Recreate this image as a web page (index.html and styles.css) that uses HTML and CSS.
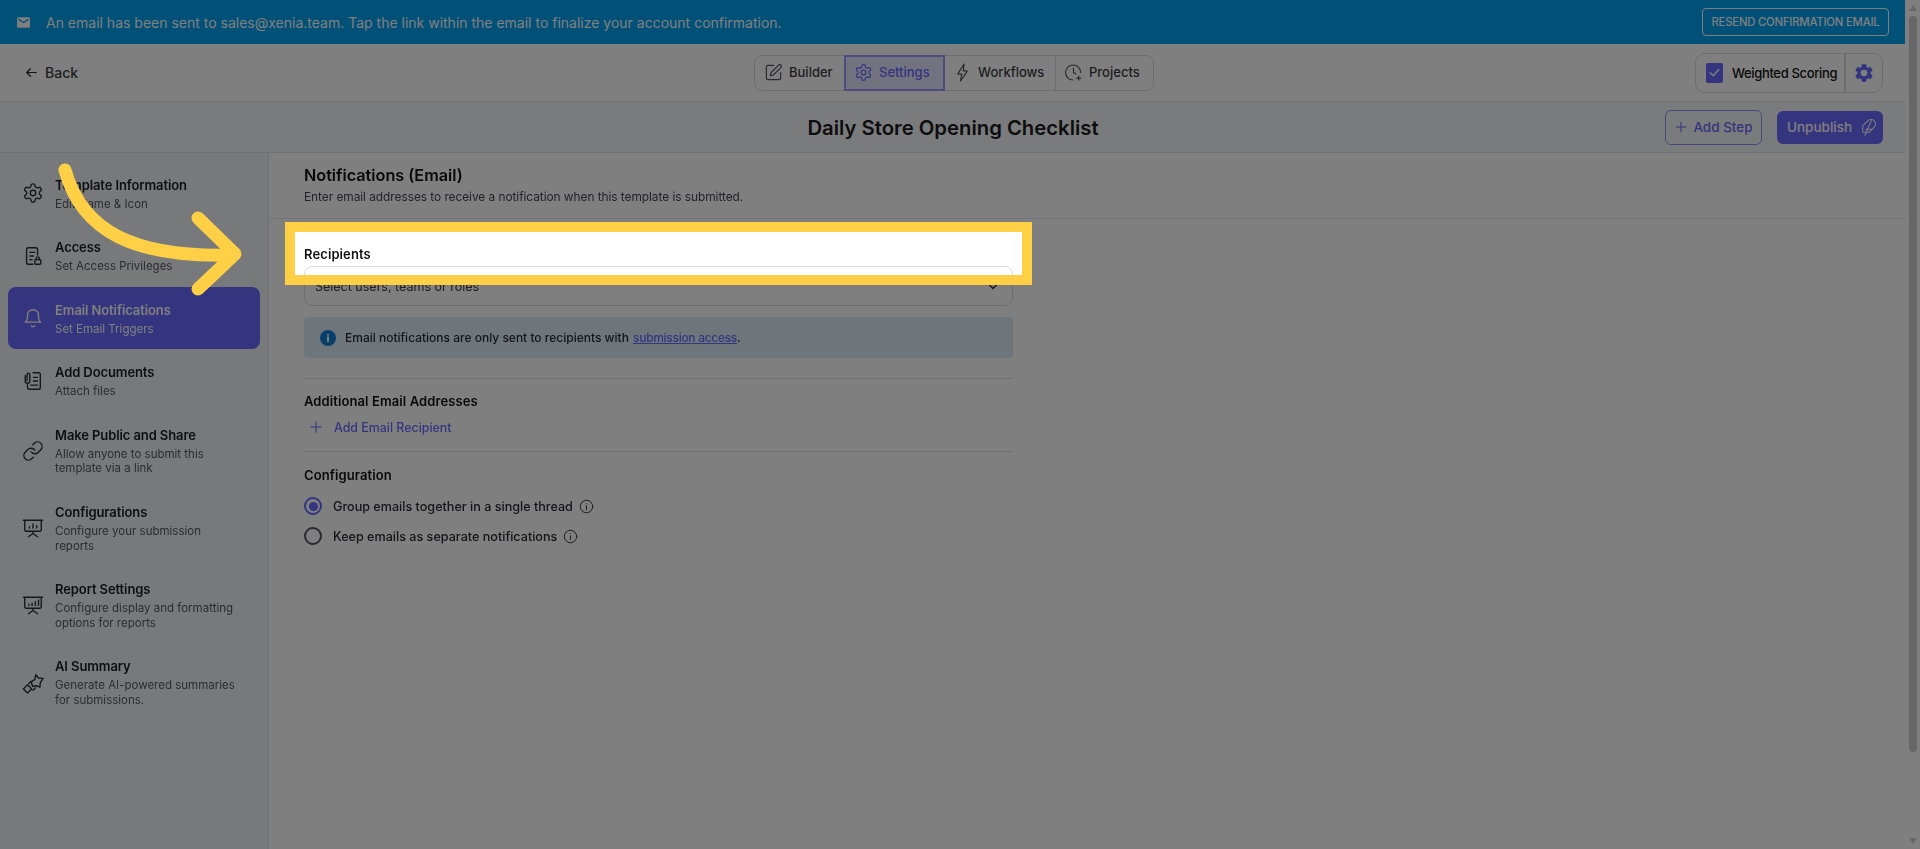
FILE: index.html
```html
<!DOCTYPE html>
<html lang="en">
<head>
<meta charset="utf-8">
<title>Daily Store Opening Checklist</title>
<link rel="stylesheet" href="styles.css">
</head>
<body>
<svg class="defs" width="0" height="0" aria-hidden="true">
  <symbol id="i-gear" viewBox="0 0 24 24"><path d="M12.22 2h-.44a2 2 0 0 0-2 2v.18a2 2 0 0 1-1 1.73l-.43.25a2 2 0 0 1-2 0l-.15-.08a2 2 0 0 0-2.73.73l-.22.38a2 2 0 0 0 .73 2.73l.15.1a2 2 0 0 1 1 1.72v.51a2 2 0 0 1-1 1.74l-.15.09a2 2 0 0 0-.73 2.73l.22.38a2 2 0 0 0 2.73.73l.15-.08a2 2 0 0 1 2 0l.43.25a2 2 0 0 1 1 1.73V20a2 2 0 0 0 2 2h.44a2 2 0 0 0 2-2v-.18a2 2 0 0 1 1-1.73l.43-.25a2 2 0 0 1 2 0l.15.08a2 2 0 0 0 2.73-.73l.22-.39a2 2 0 0 0-.73-2.73l-.15-.08a2 2 0 0 1-1-1.74v-.5a2 2 0 0 1 1-1.74l.15-.09a2 2 0 0 0 .73-2.73l-.22-.38a2 2 0 0 0-2.73-.73l-.15.08a2 2 0 0 1-2 0l-.43-.25a2 2 0 0 1-1-1.73V4a2 2 0 0 0-2-2z"/><circle cx="12" cy="12" r="3"/></symbol>
  <symbol id="i-present" viewBox="0 0 24 24"><path d="M1.500 3.500h21M3 3.500V14a1.500 1.500 0 0 0 1.500 1.500h15A1.500 1.500 0 0 0 21 14V3.500M12 15.500V18M7 21.500l5-3.500 5 3.500"/><path d="M8 12v-1.500M12 12V7.500M16 12V9.500"/></symbol>
  <symbol id="i-report" viewBox="0 0 24 24"><path d="M1.500 3.500h21M3 3.500V14a1.500 1.500 0 0 0 1.500 1.500h15A1.500 1.500 0 0 0 21 14V3.500M12 15.500V18M7 21.500l5-3.500 5 3.500"/><path d="M7.500 12.500v-1.500M11 12.500V10M14.500 12.500V8.500M18 12.500V6.500"/></symbol>
  <symbol id="i-info" viewBox="0 0 24 24"><circle cx="12" cy="12" r="10"/><path d="M12 11v6M12 7.500v.01"/></symbol>
</svg>

<div class="screen">
  <div class="app">
    <div class="banner">
      <div class="banner-msg">
        <svg class="mail" viewBox="0 0 24 24"><path d="M20 4H4c-1.100 0-2 .9-2 2v12c0 1.100.9 2 2 2h16c1.100 0 2-.9 2-2V6c0-1.100-.9-2-2-2zm0 4-8 5-8-5V6l8 5 8-5v2z"/></svg>
        <span>An email has been sent to sales@xenia.team. Tap the link within the email to finalize your account confirmation.</span>
      </div>
      <button class="resend">RESEND CONFIRMATION EMAIL</button>
    </div>

    <header class="topbar">
      <a class="back">
        <svg class="ico-back" viewBox="0 0 24 24"><path d="M21 12H3M10 5l-7 7 7 7"/></svg>
        <span>Back</span>
      </a>
      <nav class="tabs">
        <a class="tab tab-builder">
          <svg class="ico" viewBox="0 0 24 24"><path d="M12 3H5a2 2 0 0 0-2 2v14a2 2 0 0 0 2 2h14a2 2 0 0 0 2-2v-7"/><path d="M18.375 2.625a1 1 0 0 1 3 3l-9.013 9.014a2 2 0 0 1-.853.505l-2.873.84a.5.5 0 0 1-.62-.62l.84-2.873a2 2 0 0 1 .506-.852z"/></svg>
          <span>Builder</span>
        </a>
        <a class="tab tab-settings active">
          <svg class="ico"><use href="#i-gear"/></svg>
          <span>Settings</span>
        </a>
        <a class="tab tab-workflows">
          <svg class="ico" viewBox="0 0 24 24"><path d="M14 1.500 6.300 13.200a.5.500 0 0 0 .4.800H11l-1.500 8.500 8.200-11.700a.5.500 0 0 0-.4-.8H13z"/></svg>
          <span>Workflows</span>
        </a>
        <a class="tab tab-projects">
          <svg class="ico" viewBox="0 0 24 24"><path d="M21 12a9.500 9.500 0 1 0-9.500 9.500M12 6.500V12l3 2M18.500 16.500v5M16 19h5"/></svg>
          <span>Projects</span>
        </a>
      </nav>
      <div class="weighted">
        <div class="weighted-main">
          <span class="checkbox"><svg viewBox="0 0 16 16"><path d="M3.500 8.300 6.700 11.500 12.500 4.800"/></svg></span>
          <span class="weighted-label">Weighted Scoring</span>
        </div>
        <div class="weighted-gear">
          <svg viewBox="0 0 24 24"><path d="M19.140 12.940c.04-.3.06-.61.06-.94 0-.32-.02-.64-.07-.94l2.030-1.580a.49.49 0 0 0 .12-.61l-1.920-3.320a.49.49 0 0 0-.59-.22l-2.390.96c-.5-.38-1.030-.7-1.620-.94l-.36-2.540a.48.48 0 0 0-.48-.41h-3.840c-.24 0-.43.17-.47.41l-.36 2.540c-.59.24-1.130.57-1.620.94l-2.390-.96a.49.49 0 0 0-.59.22L2.740 8.870c-.12.21-.08.47.12.61l2.030 1.580c-.05.3-.09.63-.09.94 0 .31.02.64.07.94l-2.030 1.580a.49.49 0 0 0-.12.61l1.920 3.320c.12.22.37.29.59.22l2.390-.96c.5.38 1.030.7 1.620.94l.36 2.540c.05.24.24.41.48.41h3.840c.24 0 .44-.17.47-.41l.36-2.540c.59-.24 1.130-.56 1.620-.94l2.390.96c.22.08.47 0 .59-.22l1.920-3.320c.12-.22.07-.47-.12-.61l-2.010-1.580zM12 15.600A3.600 3.600 0 1 1 12 8.400a3.600 3.600 0 0 1 0 7.200z"/></svg>
        </div>
      </div>
    </header>

    <div class="titlebar">
      <h1>Daily Store Opening Checklist</h1>
      <div class="title-actions">
        <button class="add-step"><svg viewBox="0 0 24 24"><path d="M12 4v16M4 12h16"/></svg><span>Add Step</span></button>
        <button class="unpublish"><span>Unpublish</span><svg viewBox="0 0 24 24"><path d="M12.670 19a2 2 0 0 0 1.416-.588l6.154-6.172a6 6 0 0 0-8.490-8.490L5.586 9.914A2 2 0 0 0 5 11.328V18a1 1 0 0 0 1 1z"/><path d="M17 2 8 23M17.500 15H9"/></svg></button>
      </div>
    </div>

    <div class="body">
      <aside class="sidebar">
        <a class="side-item">
          <svg class="side-ico"><use href="#i-gear"/></svg>
          <div class="side-text"><div class="side-title">Template Information</div><div class="side-sub">Edit Name &amp; Icon</div></div>
        </a>
        <a class="side-item">
          <svg class="side-ico" viewBox="0 0 24 24"><path d="M17 11V5a2 2 0 0 0-2-2H7a2 2 0 0 0-2 2v14a2 2 0 0 0 2 2h5"/><path d="M8.500 8H14M8.500 12h4M8.500 16H11"/><rect x="14" y="16" width="6.500" height="5" rx="1"/><path d="M15.500 16v-1.300a1.750 1.750 0 0 1 3.500 0V16"/></svg>
          <div class="side-text"><div class="side-title">Access</div><div class="side-sub">Set Access Privileges</div></div>
        </a>
        <a class="side-item selected">
          <svg class="side-ico" viewBox="0 0 24 24"><path d="M6 9a6 6 0 0 1 12 0c0 6 2.500 7.500 2.500 7.500h-17S6 15 6 9"/><path d="M10.300 20.500a2 2 0 0 0 3.400 0"/></svg>
          <div class="side-text"><div class="side-title">Email Notifications</div><div class="side-sub">Set Email Triggers</div></div>
        </a>
        <a class="side-item">
          <svg class="side-ico" viewBox="0 0 24 24"><path d="M12 3h6a2 2 0 0 1 2 2v14a2 2 0 0 1-2 2H8a2 2 0 0 1-2-2v-3"/><path d="M3.500 6v6a2.500 2.500 0 0 0 5 0V5a1.500 1.500 0 0 0-3 0v6.500"/><path d="M12.500 8H17M12.500 12H17M9.500 16.500H17"/></svg>
          <div class="side-text"><div class="side-title">Add Documents</div><div class="side-sub">Attach files</div></div>
        </a>
        <a class="side-item">
          <svg class="side-ico" viewBox="0 0 24 24"><path d="M10 13a5 5 0 0 0 7.540.54l3-3a5 5 0 0 0-7.070-7.070l-1.720 1.710"/><path d="M14 11a5 5 0 0 0-7.540-.54l-3 3a5 5 0 0 0 7.070 7.070l1.710-1.710"/></svg>
          <div class="side-text"><div class="side-title">Make Public and Share</div><div class="side-sub">Allow anyone to submit this<br>template via a link</div></div>
        </a>
        <a class="side-item">
          <svg class="side-ico"><use href="#i-present"/></svg>
          <div class="side-text"><div class="side-title">Configurations</div><div class="side-sub">Configure your submission<br>reports</div></div>
        </a>
        <a class="side-item">
          <svg class="side-ico"><use href="#i-report"/></svg>
          <div class="side-text"><div class="side-title">Report Settings</div><div class="side-sub">Configure display and formatting<br>options for reports</div></div>
        </a>
        <a class="side-item">
          <svg class="side-ico" viewBox="0 0 24 24"><path d="M1.500 18.500 6 14l4.500 4.500L6 23zM10 11l4-3 1-5 3 3.500 5 .5-3 4.500-.5 5-4-1.500-4 .5z"/><path d="M7.500 12.500 10 10M12 20l2.500-2.500"/></svg>
          <div class="side-text"><div class="side-title">AI Summary</div><div class="side-sub">Generate AI-powered summaries<br>for submissions.</div></div>
        </a>
      </aside>

      <main class="main">
        <section class="main-head">
          <h2>Notifications (Email)</h2>
          <p>Enter email addresses to receive a notification when this template is submitted.</p>
        </section>
        <section class="form">
          <label class="field-label recipients">Recipients</label>
          <div class="select">
            <span>Select users, teams or roles</span>
            <svg viewBox="0 0 24 24"><path d="M6 9l6 6 6-6"/></svg>
          </div>
          <div class="notice">
            <svg viewBox="0 0 24 24"><circle cx="12" cy="12" r="11"/><path d="M12 11v6M12 7v.01"/></svg>
            <span>Email notifications are only sent to recipients with <a class="link">submission access</a>.</span>
          </div>
          <hr class="rule rule-a">
          <div class="field-label">Additional Email Addresses</div>
          <a class="add-email"><svg viewBox="0 0 24 24"><path d="M12 4v16M4 12h16"/></svg><span>Add Email Recipient</span></a>
          <hr class="rule rule-b">
          <div class="field-label">Configuration</div>
          <label class="radio-row first"><span class="radio on"></span><span>Group emails together in a single thread</span><svg class="tip"><use href="#i-info"/></svg></label>
          <label class="radio-row"><span class="radio"></span><span>Keep emails as separate notifications</span><svg class="tip"><use href="#i-info"/></svg></label>
        </section>
      </main>
    </div>
  </div>

  <div class="scrollbar">
    <div class="scroll-up"></div>
    <div class="scroll-thumb"></div>
    <div class="scroll-down"></div>
  </div>
</div>

<div class="spotlight"></div>
<svg class="arrow" viewBox="0 0 300 300" width="300" height="300">
  <path d="M65 170C82 232 135 258 233 255M198 218 235 254 198 289"/>
</svg>
</body>
</html>
```
FILE: styles.css
```css
* { box-sizing: border-box; }
html, body { margin: 0; height: 100%; overflow: hidden; }
body { font-family: Inter, "Noto Sans", sans-serif; color: #1c1c22; background: #fff; }
.defs { position: absolute; }
svg { fill: none; stroke: currentColor; stroke-width: 1.8; stroke-linecap: round; stroke-linejoin: round; display: block; flex: none; }
h1, h2, p { margin: 0; }
button { font: inherit; background: none; cursor: pointer; }

.screen { display: flex; height: 100vh; }
.app { flex: 1; min-width: 0; display: flex; flex-direction: column; filter: blur(.35px); }

/* banner */
.banner { height: 44px; flex: none; background: #00a0f0; color: #fff; display: flex; align-items: center; justify-content: space-between; padding: 0 16px 0 17px; }
.banner-msg { display: flex; align-items: center; gap: 16px; font-size: 14px; }
.mail { width: 13px; height: 13px; fill: #fff; stroke: none; transform: scale(1.2); }
.resend { height: 28px; width: 187px; border: 1px solid #fff; border-radius: 4px; color: #fff; font-size: 11.3px; font-weight: 500; padding: 0; letter-spacing: -.2px; }

/* top bar */
.topbar { height: 58px; flex: none; background: #fff; border-bottom: 1px solid #e4e6ea; display: grid; grid-template-columns: 1fr auto 1fr; align-items: center; padding: 0 22px 0 25px; }
.back { display: flex; align-items: center; gap: 7px; font-size: 14px; font-weight: 500; color: #3c3c44; }
.ico-back { width: 13px; height: 13px; color: #27272e; stroke-width: 2.2; }
.tabs { display: flex; height: 36px; border: 1px solid #d8dade; border-radius: 8px; }
.tab { display: flex; align-items: center; gap: 6px; padding-left: 9px; font-size: 13px; font-weight: 500; color: #3c3c44; line-height: 16px; }
.tab span { margin-top: -1px; }
.tab .ico { width: 19px; height: 19px; color: #54545c; stroke-width: 1.5; }
.tab-builder { width: 89px; }
.tab-settings { width: 101px; }
.tab-workflows { width: 111px; border-right: 1px solid #d8dade; padding-left: 8px; }
.tab-projects { width: 97px; padding-left: 8px; }
.tab.active { border: 2px solid #9a96ff; background: #e6e6ff; color: #6868fe; padding-left: 8px; margin: -1px 0; height: 36px; }
.tab.active .ico { color: #6868fe; }
.weighted { justify-self: end; display: flex; height: 40px; width: 188px; border: 1px solid #d8dade; border-radius: 10px; }
.weighted-main { flex: 1; display: flex; align-items: center; gap: 9px; padding-left: 10px; border-right: 2px solid #d8dade; }
.checkbox { width: 17px; height: 20px; border-radius: 2px; background: #6868fe; color: #fff; display: flex; align-items: center; justify-content: center; }
.checkbox svg { width: 15px; height: 15px; stroke-width: 1.6; }
.weighted-label { font-size: 13px; font-weight: 500; color: #111; letter-spacing: -.35px; white-space: nowrap; }
.weighted-gear { width: 36px; display: flex; align-items: center; justify-content: center; }
.weighted-gear svg { width: 22px; height: 22px; fill: #6868fe; stroke: none; }

/* title row */
.titlebar { height: 51px; flex: none; position: relative; background: #f5f7fa; border-bottom: 1px solid #dfe3e9; display: flex; align-items: center; justify-content: flex-end; padding-right: 22px; }
.titlebar h1 { position: absolute; left: 0; right: 0; text-align: center; font-size: 20.3px; font-weight: 600; color: #1a1a20; padding-left: 1px; }
.title-actions { position: relative; display: flex; align-items: center; gap: 15px; }
.add-step { width: 97px; height: 35px; border: 1px solid #8e8ef9; border-radius: 6px; color: #6868fe; display: flex; align-items: center; justify-content: center; gap: 5px; font-size: 13.5px; font-weight: 500; padding: 0; }
.add-step svg { width: 14px; height: 14px; }
.unpublish { width: 106px; height: 33px; border: 0; border-radius: 6px; background: #6868fe; color: #fff; display: flex; align-items: center; gap: 7px; font-size: 13.5px; font-weight: 500; padding: 0 0 0 10px; }
.unpublish svg { width: 18px; height: 18px; stroke-width: 1.4; }

/* body */
.body { flex: 1; display: flex; min-height: 0; }
.sidebar { width: 269px; flex: none; background: #f1f3f6; border-right: 1px solid #dfe3e9; padding: 8.5px 8px 0; }
.side-item { display: flex; align-items: center; gap: 11px; padding: 14px 14px 12.75px; }
.side-item.selected { background: #6868fe; border-radius: 8px; color: #fff; }
.side-ico { width: 22px; height: 22px; stroke-width: 1.5; color: #2e2e36; }
.selected .side-ico { color: #fff; }
.side-title { font-size: 13px; line-height: 18px; font-weight: 600; color: #1c1c22; letter-spacing: -.1px; white-space: nowrap; }
.side-sub { margin-top: 3px; font-size: 11.5px; line-height: 14.75px; font-weight: 400; color: #585860; white-space: nowrap; }
.selected .side-title, .selected .side-sub { color: #fff; }
.main { flex: 1; min-width: 0; background: #fff; }
.main-head { height: 66px; padding: 12px 0 0 35px; border-bottom: 1px solid #e8e9ec; }
.main-head h2 { font-size: 16.2px; line-height: 20px; font-weight: 600; color: #111; }
.main-head p { margin-top: 3px; font-size: 11.9px; line-height: 18px; color: #46464e; letter-spacing: -.05px; }
.form { width: 744px; padding: 25px 0 0 35px; }
.field-label { display: block; font-size: 13px; line-height: 20px; font-weight: 600; color: #111; letter-spacing: .1px; }
.select { margin-top: 2px; height: 40px; border: 1px solid #d8dade; border-radius: 8px; display: flex; align-items: center; justify-content: space-between; padding: 0 9px 0 10px; font-size: 12.5px; color: #3c3c44; }
.select svg { width: 20px; height: 20px; color: #3c3c44; stroke-width: 2; }
.notice { margin-top: 11px; height: 41px; background: #dcedf9; border-radius: 4px; display: flex; align-items: center; gap: 9px; padding-left: 16px; font-size: 12px; font-weight: 500; color: #2a2a30; }
.notice svg { width: 16px; height: 16px; fill: #0e7fd6; color: #fff; stroke: #fff; }
.notice svg circle { stroke: #0e7fd6; stroke-width: 2; }
.notice svg path { stroke-width: 3; }
.link { color: #6868fe; text-decoration: underline; margin-left: 1px; letter-spacing: -.3px; }
.rule { border: 0; height: 1px; background: #e0e2e6; margin: 0; }
.rule-a { margin: 20px 0 12px; }
.add-email { margin-top: 6px; height: 20px; display: flex; align-items: center; gap: 10px; padding-left: 4px; color: #6868fe; font-size: 12.4px; font-weight: 500; }
.add-email svg { width: 16px; height: 16px; stroke-width: 1.6; }
.rule-b { margin: 14px 0 13px; }
.radio-row { display: flex; align-items: center; height: 30px; font-size: 12.6px; font-weight: 500; color: #2a2a30; }
.radio-row.first { margin-top: 6px; }
.radio { width: 18px; height: 18px; border: 2px solid #55555e; border-radius: 50%; margin-right: 11px; flex: none; }
.radio.on { border-color: #6868fe; position: relative; }
.radio.on::after { content: ""; position: absolute; inset: 2.5px; border-radius: 50%; background: #6868fe; }
.tip { width: 15px; height: 15px; margin-left: 6px; stroke-width: 1.6; color: #3c3c44; }

/* scrollbar */
.scrollbar { width: 15px; flex: none; background: #fff; display: flex; flex-direction: column; align-items: center; padding-bottom: 5px; }
.scroll-up { margin-top: 5px; width: 0; height: 0; border-left: 4.5px solid transparent; border-right: 4.5px solid transparent; border-bottom: 6px solid #cecece; }
.scroll-thumb { margin-top: 5px; width: 8px; height: 736px; background: #cecece; border-radius: 4px; }
.scroll-down { margin-top: auto; width: 0; height: 0; border-left: 4.5px solid transparent; border-right: 4.5px solid transparent; border-top: 6px solid #cecece; }

/* tour overlay */
.spotlight { position: absolute; left: 285px; top: 222px; width: 747px; height: 63px; border: 10px solid #ffd045; box-shadow: 0 0 0 3000px rgba(0,0,0,.5); }
.arrow { position: absolute; left: 0; top: 0; stroke: #ffd045; stroke-width: 13; }
```
